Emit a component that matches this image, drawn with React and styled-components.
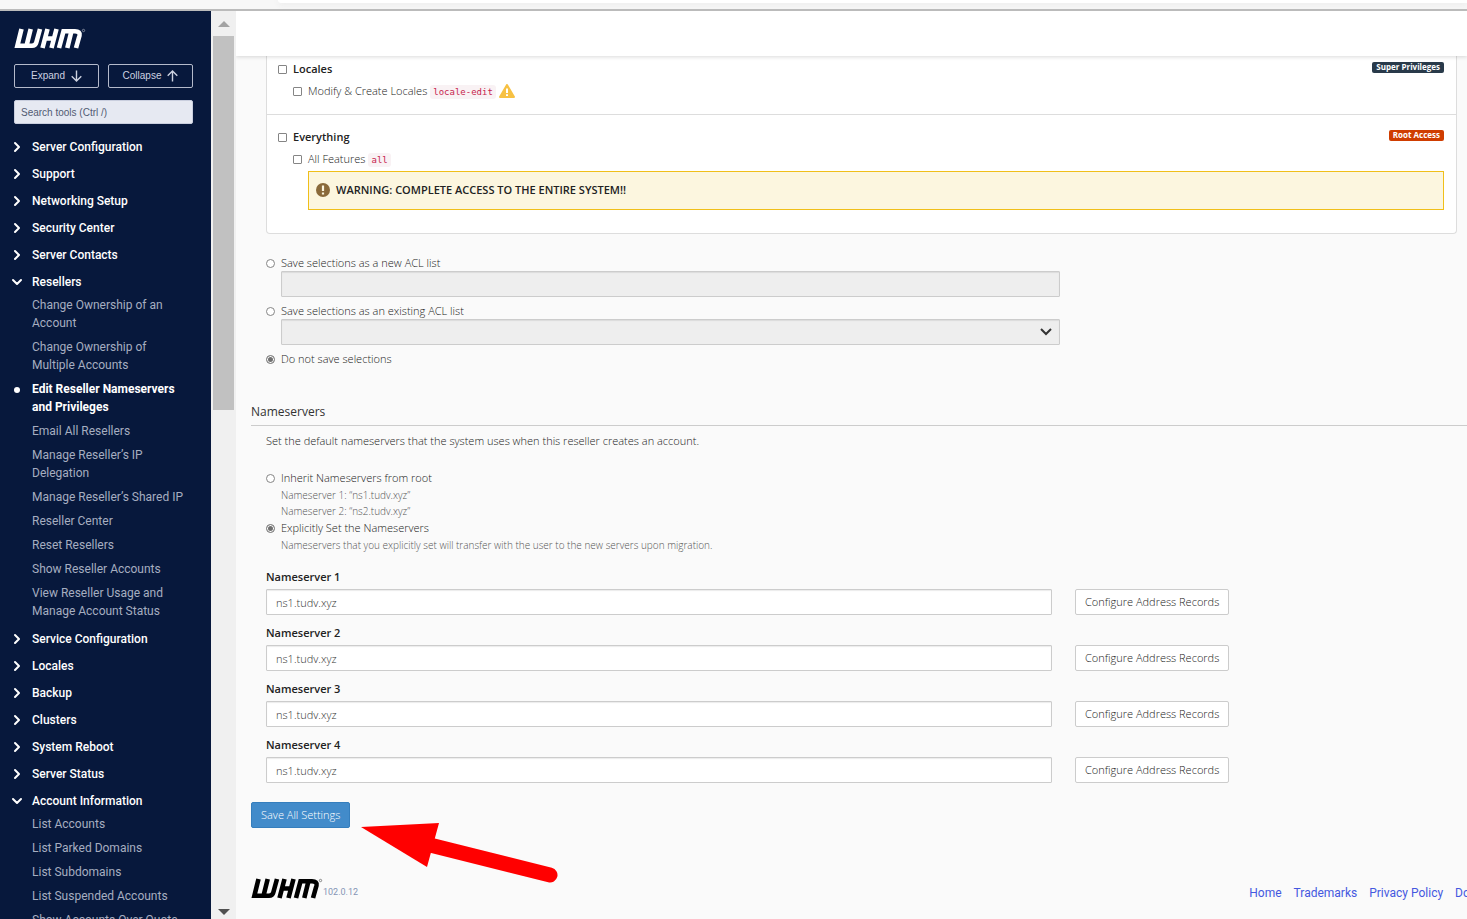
import React from "react";
import styled, { createGlobalStyle } from "styled-components";

const Global = createGlobalStyle`
  * { box-sizing: border-box; }
  body { margin: 0; background: #fafafa; color: #222; font: 300 11px/18px "Open Sans", sans-serif; }
  button, input, select { font-family: inherit; font-weight: inherit; }
  ul { list-style: none; margin: 0; padding: 0; }
  p, h2, h3 { margin: 0; }
`;

const Page = styled.div`
  height: 100vh;
  display: grid;
  grid-template-rows: 11px 1fr;
  overflow: hidden;
`;
const BrowserEdge = styled.div`
  background: #f7f7f7;
  border-bottom: 2px solid #bbb;
  padding-left: 278px;
  overflow: hidden;
`;
const AddressBar = styled.div`
  height: 3px;
  background: #fff;
  border-bottom-left-radius: 4px;
  box-shadow: 0 1px 6px #e4e4e4;
`;
const Frame = styled.div`
  display: grid;
  grid-template-columns: 211px 25px minmax(0, 1fr);
  min-height: 0;
`;

const Sidebar = styled.nav`
  background: #07183c;
  color: #fff;
  padding: 17px 18px 0 14px;
  overflow: hidden;
  font: 400 12px/18px Roboto, sans-serif;
`;
const Tools = styled.div`
  display: grid;
  grid-template-columns: 1fr 1fr;
  gap: 9px;
  margin-top: 15px;
`;
const ToolButton = styled.button`
  height: 24px;
  display: flex;
  align-items: center;
  justify-content: center;
  gap: 6px;
  padding: 0;
  color: #cdd2e0;
  background: transparent;
  border: 1px solid #b4bacb;
  border-radius: 2px;
  font: 10px/18px "Liberation Sans", sans-serif;
`;
const Search = styled.input`
  display: block;
  width: 100%;
  height: 24px;
  margin: 12px 0 10px;
  padding: 0 6px;
  border: 1px solid #c9cede;
  border-radius: 2px;
  background: #e6e9f2;
  font: 10px/18px "Liberation Sans", sans-serif;
  &::placeholder { color: #525b73; opacity: 1; }
`;
const Heading = styled.button`
  width: 100%;
  height: 27px;
  display: flex;
  align-items: center;
  gap: 9px;
  padding: 0 0 2px;
  border: 0;
  background: none;
  color: #fff;
  font: 500 12px/18px Roboto, sans-serif;
  text-align: left;
  svg { margin-left: -3px; }
`;
const SubItem = styled.li`
  position: relative;
  padding: 0 6px 0 18px;
  margin-bottom: 6px;
  &::before {
    content: ${(p) => (p.$active ? '""' : "none")};
    position: absolute;
    left: 0;
    top: 7px;
    width: 6px;
    height: 6px;
    border-radius: 50%;
    background: #fff;
  }
`;
const SubLink = styled.a`
  color: ${(p) => (p.$active ? "#fff" : "#a6aec0")};
  font-weight: ${(p) => (p.$active ? 700 : 400)};
  text-decoration: none;
`;

const ScrollTrack = styled.div`
  background: #f0f0f0;
  display: flex;
  flex-direction: column;
  align-items: center;
  padding: 10px 2px 4px;
  min-height: 0;
`;
const ScrollThumb = styled.div`
  width: 21px;
  height: 374px;
  margin: 9px 0 auto;
  background: #c1c1c1;
`;

const Main = styled.main`
  min-width: 0;
  overflow: hidden;
  background: #fafafa;
`;
const Header = styled.header`
  position: relative;
  height: 45px;
  background: #fff;
  box-shadow: 0 1px 4px rgba(0, 0, 0, 0.15);
`;
const Content = styled.div`
  padding-left: 15px;
`;
const Panel = styled.section`
  margin: 0 10px 20px 15px;
  border: 1px solid #ddd;
  border-top: 0;
  border-radius: 0 0 4px 4px;
  background: #fff;
`;
const AclGroup = styled.div`
  padding: ${(p) => (p.$last ? "13px 12px 23px 11px" : "4px 12px 14px 11px")};
  & + & { border-top: 1px solid #ddd; }
`;
const AclHead = styled.div`
  display: flex;
  justify-content: space-between;
  align-items: center;
  height: 18px;
  font-weight: 600;
`;
const Badge = styled.span`
  padding: 0 4px;
  margin-bottom: 4px;
  height: 11px;
  border-radius: 2px;
  background: ${(p) => p.$color};
  color: #fff;
  font-size: 8px;
  font-weight: 700;
  line-height: 9px;
`;
const Choice = styled.label`
  display: flex;
  align-items: center;
  height: 18px;
  gap: 6px;
`;
const AclItem = styled(Choice)`
  margin: 4px 0 0 15px;
`;
const Box = styled.input`
  appearance: none;
  width: 9px;
  height: 9px;
  margin: 0;
  border: 1px solid #858585;
  border-radius: ${(p) => (p.type === "radio" ? "50%" : "1px")};
  background: #fff;
  &:checked { background: #707070; box-shadow: inset 0 0 0 1px #fff; }
`;
const Code = styled.code`
  padding: 1px 3px;
  margin: 2px 0 0 -3px;
  border-radius: 3px;
  background: #f9f2f4;
  color: #c7254e;
  font: 400 9px/12px "DejaVu Sans Mono", monospace;
`;
const Alert = styled.div`
  margin: 3px 0 0 30px;
  height: 39px;
  display: flex;
  align-items: center;
  gap: 6px;
  padding: 0 0 1px 7px;
  border: 1px solid #f0bf1a;
  background: #fcf6df;
  font-weight: 600;
`;

const SaveOptions = styled.div`
  max-width: 809px;
  padding-left: 15px;
`;
const fieldStyle = `
  display: block;
  width: 100%;
  height: 26px;
  border: 1px solid #ccc;
  border-radius: 1px;
  padding: 0 9px;
  color: #333;
  font-size: 11px;
  line-height: 18px;
  box-shadow: inset 0 1px 1px rgba(0, 0, 0, 0.08);
`;
const Field = styled.input`
  ${fieldStyle}
  background: #fff;
  &:disabled { background: #eee; }
`;
const Select = styled.select`
  ${fieldStyle}
  appearance: none;
  background: #eee;
  opacity: 1;
`;
const Nested = styled.div`
  position: relative;
  margin: -1px 0 4px 15px;
  height: 27px;
  svg { position: absolute; right: 8px; top: 9px; pointer-events: none; }
`;
const SectionTitle = styled.h2`
  margin-top: 35px;
  padding-bottom: 4px;
  border-bottom: 1px solid #ccc;
  color: #333;
  font-size: 12px;
  line-height: 18px;
  font-weight: 400;
`;
const SectionBody = styled.div`
  padding: 6px 15px 0;
`;
const NsMode = styled.div`
  margin-top: 19px;
`;
const Hint = styled.p`
  margin-left: 15px;
  color: #555;
  font-size: 10px;
  line-height: 16px;
`;
const NsList = styled.div`
  display: grid;
  gap: 9px;
  margin-top: 15px;
`;
const NsRow = styled.div`
  display: grid;
  grid-template-columns: minmax(0, 786px) auto;
  justify-content: start;
  gap: 3px 23px;
`;
const NsLabel = styled.label`
  grid-column: 1 / -1;
  font-weight: 600;
`;
const Button = styled.button`
  height: 26px;
  padding: 0 9px;
  border: 1px solid ${(p) => (p.$primary ? "#357ebd" : "#ccc")};
  border-radius: 2px;
  background: ${(p) => (p.$primary ? "#428bca" : "#fff")};
  color: ${(p) => (p.$primary ? "#fff" : "#222")};
  font-size: 11px;
  line-height: 18px;
`;
const SaveBar = styled.div`
  position: relative;
  display: flex;
  margin-top: 19px;
`;
const Pointer = styled.svg`
  position: absolute;
  left: 109px;
  top: 19px;
`;
const Footer = styled.footer`
  display: flex;
  align-items: flex-start;
  margin-top: 50px;
  font-family: Roboto, sans-serif;
  font-weight: 400;
`;
const Version = styled.span`
  margin-top: 5px;
  color: #8595b5;
  font-size: 9px;
`;
const FooterLinks = styled.div`
  display: flex;
  gap: 12px;
  margin: 6px -70px 0 auto;
  white-space: nowrap;
  font-size: 12px;
  a { color: #4458e0; text-decoration: none; }
`;
const LogoMark = styled.svg`
  display: block;
`;
const WarningIcon = styled.svg`
  margin-left: -3px;
`;

function Logo({ color }) {
  return (
    <LogoMark width="72" height="21" viewBox="0 -1 72 21" fill="none" stroke={color} strokeWidth="4.600" role="img" aria-label="WHM">
      <path strokeLinejoin="miter" d="M7.500 0 L3.400 16.700 H18 Q21.500 16.700 22.300 13.500 L26 0 M16.700 0 L12.700 16" />
      <path d="M33.500 0 L28.500 19 M42.500 0 L37.500 19 M31 9.500 H41" />
      <path strokeLinejoin="miter" d="M45 19 L49.500 2.300 H61 Q66.500 2.300 65.500 6.500 L62 19 M57.500 2 L53.300 19" />
      <circle cx="69.500" cy="1.500" r="1.200" strokeWidth=".6" opacity=".7" />
    </LogoMark>
  );
}

function Chevron({ open }) {
  return (
    <svg width="12" height="12" viewBox="0 0 12 12" fill="none" stroke="#fff" strokeWidth="2" strokeLinecap="round" strokeLinejoin="round">
      <path d={open ? "M2 4 L6 8 L10 4" : "M4 2 L8 6 L4 10"} />
    </svg>
  );
}

function Arrow({ up }) {
  return (
    <svg width="11" height="12" viewBox="0 0 11 12" fill="none" stroke="currentColor" strokeWidth="1.400">
      <path d={up ? "M5.500 11.500 V1 M.7 5.800 L5.500 1 L10.300 5.800" : "M5.500 .5 V11 M.7 6.200 L5.500 11 L10.300 6.200"} />
    </svg>
  );
}

const menu = [
  ["Server Configuration"], ["Support"], ["Networking Setup"], ["Security Center"], ["Server Contacts"],
  ["Resellers", [
    "Change Ownership of an Account", "Change Ownership of Multiple Accounts",
    "Edit Reseller Nameservers and Privileges", "Email All Resellers", "Manage Reseller’s IP Delegation",
    "Manage Reseller’s Shared IP", "Reseller Center", "Reset Resellers", "Show Reseller Accounts",
    "View Reseller Usage and Manage Account Status",
  ]],
  ["Service Configuration"], ["Locales"], ["Backup"], ["Clusters"], ["System Reboot"], ["Server Status"],
  ["Account Information", [
    "List Accounts", "List Parked Domains", "List Subdomains", "List Suspended Accounts", "Show Accounts Over Quota",
  ]],
];
const current = "Edit Reseller Nameservers and Privileges";

export default function App() {
  return (
    <Page>
      <Global />
      <BrowserEdge><AddressBar /></BrowserEdge>
      <Frame>
        <Sidebar>
          <Logo color="#fff" />
          <Tools>
            <ToolButton>Expand <Arrow /></ToolButton>
            <ToolButton>Collapse <Arrow up /></ToolButton>
          </Tools>
          <Search type="text" aria-label="Search tools" placeholder="Search tools (Ctrl /)" />
          {menu.map(([title, items]) => (
            <div key={title}>
              <Heading aria-expanded={!!items}><Chevron open={!!items} />{title}</Heading>
              {items && (
                <ul>
                  {items.map((t) => (
                    <SubItem key={t} $active={t === current}>
                      <SubLink href="#" $active={t === current}>{t}</SubLink>
                    </SubItem>
                  ))}
                </ul>
              )}
            </div>
          ))}
        </Sidebar>
        <ScrollTrack>
          <svg width="12" height="6"><path d="M0 6 L6 0 L12 6Z" fill="#a3a3a3" /></svg>
          <ScrollThumb />
          <svg width="12" height="6"><path d="M0 0 L6 6 L12 0Z" fill="#505050" /></svg>
        </ScrollTrack>
        <Main>
          <Header />
          <Content>
            <Panel>
              <AclGroup>
                <AclHead>
                  <Choice><Box type="checkbox" />Locales</Choice>
                  <Badge $color="#293a4a">Super Privileges</Badge>
                </AclHead>
                <AclItem>
                  <Box type="checkbox" />Modify &amp; Create Locales <Code>locale-edit</Code>
                  <WarningIcon width="16" height="14" viewBox="0 0 16 14">
                    <path d="M8 1 L15 13 H1Z" fill="#f7c143" stroke="#f7c143" strokeWidth="2" strokeLinejoin="round" />
                    <path d="M8 4.500 V9 M8 10.300 V12" stroke="#fff" strokeWidth="2" />
                  </WarningIcon>
                </AclItem>
              </AclGroup>
              <AclGroup $last>
                <AclHead>
                  <Choice><Box type="checkbox" />Everything</Choice>
                  <Badge $color="#cf3d00">Root Access</Badge>
                </AclHead>
                <AclItem><Box type="checkbox" />All Features <Code>all</Code></AclItem>
                <Alert>
                  <svg width="14" height="14" viewBox="0 0 14 14">
                    <circle cx="7" cy="7" r="7" fill="#8a6a3b" />
                    <path d="M7 2.500 V8 M7 9.500 V11.500" stroke="#fcf6df" strokeWidth="2.200" />
                  </svg>
                  WARNING: COMPLETE ACCESS TO THE ENTIRE SYSTEM!!
                </Alert>
              </AclGroup>
            </Panel>

            <SaveOptions>
              <Choice><Box type="radio" name="acl" />Save selections as a new ACL list</Choice>
              <Nested><Field type="text" aria-label="New ACL list name" disabled /></Nested>
              <Choice><Box type="radio" name="acl" />Save selections as an existing ACL list</Choice>
              <Nested>
                <Select aria-label="Existing ACL list" disabled />
                <svg width="12" height="8" viewBox="0 0 12 8" fill="none" stroke="#333" strokeWidth="2"><path d="M1 1 L6 6 L11 1" /></svg>
              </Nested>
              <Choice><Box type="radio" name="acl" defaultChecked />Do not save selections</Choice>
            </SaveOptions>

            <SectionTitle>Nameservers</SectionTitle>
            <SectionBody>
              <p>Set the default nameservers that the system uses when this reseller creates an account.</p>
              <NsMode>
                <Choice><Box type="radio" name="ns" />Inherit Nameservers from root</Choice>
                <Hint>Nameserver 1: “ns1.tudv.xyz”</Hint>
                <Hint>Nameserver 2: “ns2.tudv.xyz”</Hint>
                <Choice><Box type="radio" name="ns" defaultChecked />Explicitly Set the Nameservers</Choice>
                <Hint>Nameservers that you explicitly set will transfer with the user to the new servers upon migration.</Hint>
              </NsMode>
              <NsList>
                {[1, 2, 3, 4].map((n) => (
                  <NsRow key={n}>
                    <NsLabel htmlFor={`ns${n}`}>Nameserver {n}</NsLabel>
                    <Field id={`ns${n}`} type="text" defaultValue="ns1.tudv.xyz" />
                    <Button>Configure Address Records</Button>
                  </NsRow>
                ))}
              </NsList>
            </SectionBody>
            <SaveBar>
              <Button $primary>Save All Settings</Button>
              <Pointer width="200" height="64" viewBox="0 0 200 64">
                <path d="M1 6 L79 2 L67 46Z" fill="#f00" />
                <path d="M70 24 L190 54" stroke="#f00" strokeWidth="15" strokeLinecap="round" />
              </Pointer>
            </SaveBar>
            <Footer>
              <Logo color="#000" />
              <Version>102.0.12</Version>
              <FooterLinks>
                <a href="#">Home</a>
                <a href="#">Trademarks</a>
                <a href="#">Privacy Policy</a>
                <a href="#">Documentation</a>
              </FooterLinks>
            </Footer>
          </Content>
        </Main>
      </Frame>
    </Page>
  );
}
